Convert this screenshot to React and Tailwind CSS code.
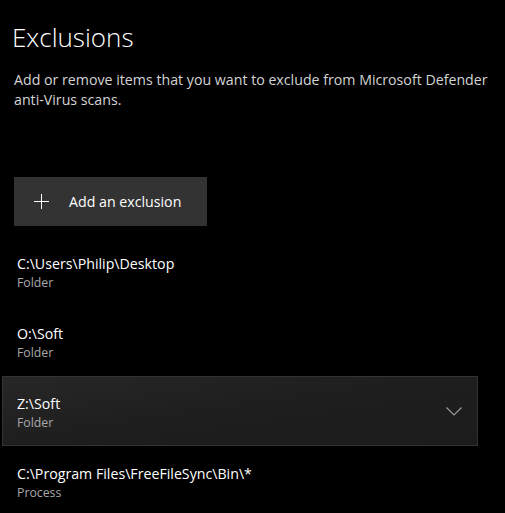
export default function App() {
  const items = [
    { path: "C:\\Users\\Philip\\Desktop", type: "Folder" },
    { path: "O:\\Soft", type: "Folder" },
    { path: "Z:\\Soft", type: "Folder", selected: true },
    { path: "C:\\Program Files\\FreeFileSync\\Bin\\*", type: "Process" },
  ];
  return (
    <div
      className="w-[505px] h-[513px] bg-black overflow-hidden text-white"
      style={{ fontFamily: '"Open Sans", "Noto Sans", sans-serif' }}
    >
      <div className="pl-[12px] pt-[19px]">
        <h1 className="text-[26px] leading-[36px] font-light">Exclusions</h1>
      </div>
      <p className="pl-[14px] mt-[15px] text-[14.2px] leading-[20px] text-[#d4d4d4] whitespace-nowrap">
        Add or remove items that you want to exclude from Microsoft Defender
        <br />
        anti-Virus scans.
      </p>
      <div className="pl-[14px] mt-[67px]">
        <button className="w-[193px] h-[49px] bg-[#333333] flex items-center pl-[20px]">
          <svg width="15" height="15" viewBox="0 0 15 15" className="shrink-0">
            <path d="M7.5 0 V15 M0 7.5 H15" stroke="#ffffff" strokeWidth="1" />
          </svg>
          <span className="ml-[20px] text-[14.2px] leading-[20px]">Add an exclusion</span>
        </button>
      </div>
      <div className="mt-[10px] ml-[2px] w-[476px] flex flex-col">
        {items.map((it) => (
          <div
            key={it.path}
            className={
              "h-[70px] shrink-0 flex items-center pl-[14px] pr-[15px] " +
              (it.selected
                ? "border border-[#333333] bg-gradient-to-br from-[#272727] via-[#1e1e1e] to-[#1c1c1c]"
                : "border border-transparent")
            }
          >
            <div className="flex-1 flex flex-col pt-[3px]">
              <span className="text-[14.2px] leading-[20px] text-white">{it.path}</span>
              <span className="text-[12.3px] leading-[18px] text-[#a8a8a8]">{it.type}</span>
            </div>
            {it.selected && (
              <svg width="16" height="9" viewBox="0 0 16 9" className="shrink-0">
                <path d="M0.5 0.5 L8 8 L15.5 0.5" stroke="#9a9a9a" strokeWidth="1.2" fill="none" />
              </svg>
            )}
          </div>
        ))}
      </div>
    </div>
  );
}
